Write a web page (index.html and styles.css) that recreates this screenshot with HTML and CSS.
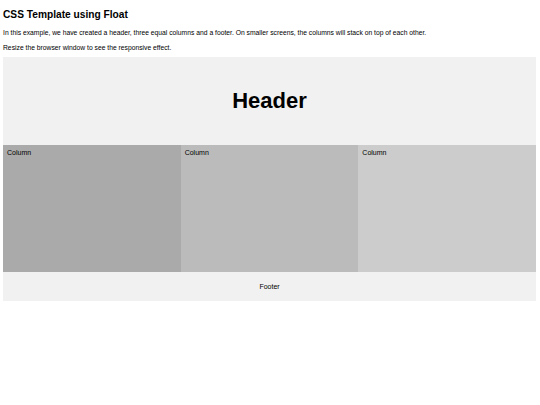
FILE: index.html
```html
<!DOCTYPE html>
<html>
<head>
<meta charset="utf-8">
<link rel="stylesheet" href="styles.css">
</head>
<body>
<h2 class="title">CSS Template using Float</h2>
<p class="intro">In this example, we have created a header, three equal columns and a footer. On smaller screens, the columns will stack on top of each other.</p>
<p class="intro last">Resize the browser window to see the responsive effect.</p>
<div class="header"><h2 class="header-title">Header</h2></div>
<div class="row">
  <div class="column c1">Column</div>
  <div class="column c2">Column</div>
  <div class="column c3">Column</div>
</div>
<div class="footer">Footer</div>
</body>
</html>
```
FILE: styles.css
```css
html, body { background: #fff; }
body {
  margin: 0;
  padding: 0 4px 0 3px;
  font-family: "Liberation Sans", Arial, sans-serif;
  color: #000;
}
.title {
  font-size: 10.2px;
  line-height: 14px;
  margin: 8px 0 6px;
  font-weight: bold;
}
.intro {
  font-size: 6.75px;
  line-height: 9px;
  margin: 0 0 6px;
}
.intro.last {
  margin-bottom: 5px;
}
.header {
  background: #f1f1f1;
  height: 88px;
  display: flex;
  align-items: center;
  justify-content: center;
}
.header-title {
  margin: 0;
  font-size: 22px;
  line-height: 26px;
  font-weight: bold;
}
.row {
  display: flex;
}
.column {
  flex: 1 1 0;
  height: 127px;
  padding: 4px 4px;
  box-sizing: border-box;
  font-size: 7px;
  line-height: 8px;
}
.c1 { background: #aaa; }
.c2 { background: #bbb; }
.c3 { background: #ccc; }
.footer {
  background: #f1f1f1;
  height: 29px;
  display: flex;
  align-items: center;
  justify-content: center;
  font-size: 7px;
  line-height: 8px;
}
```
